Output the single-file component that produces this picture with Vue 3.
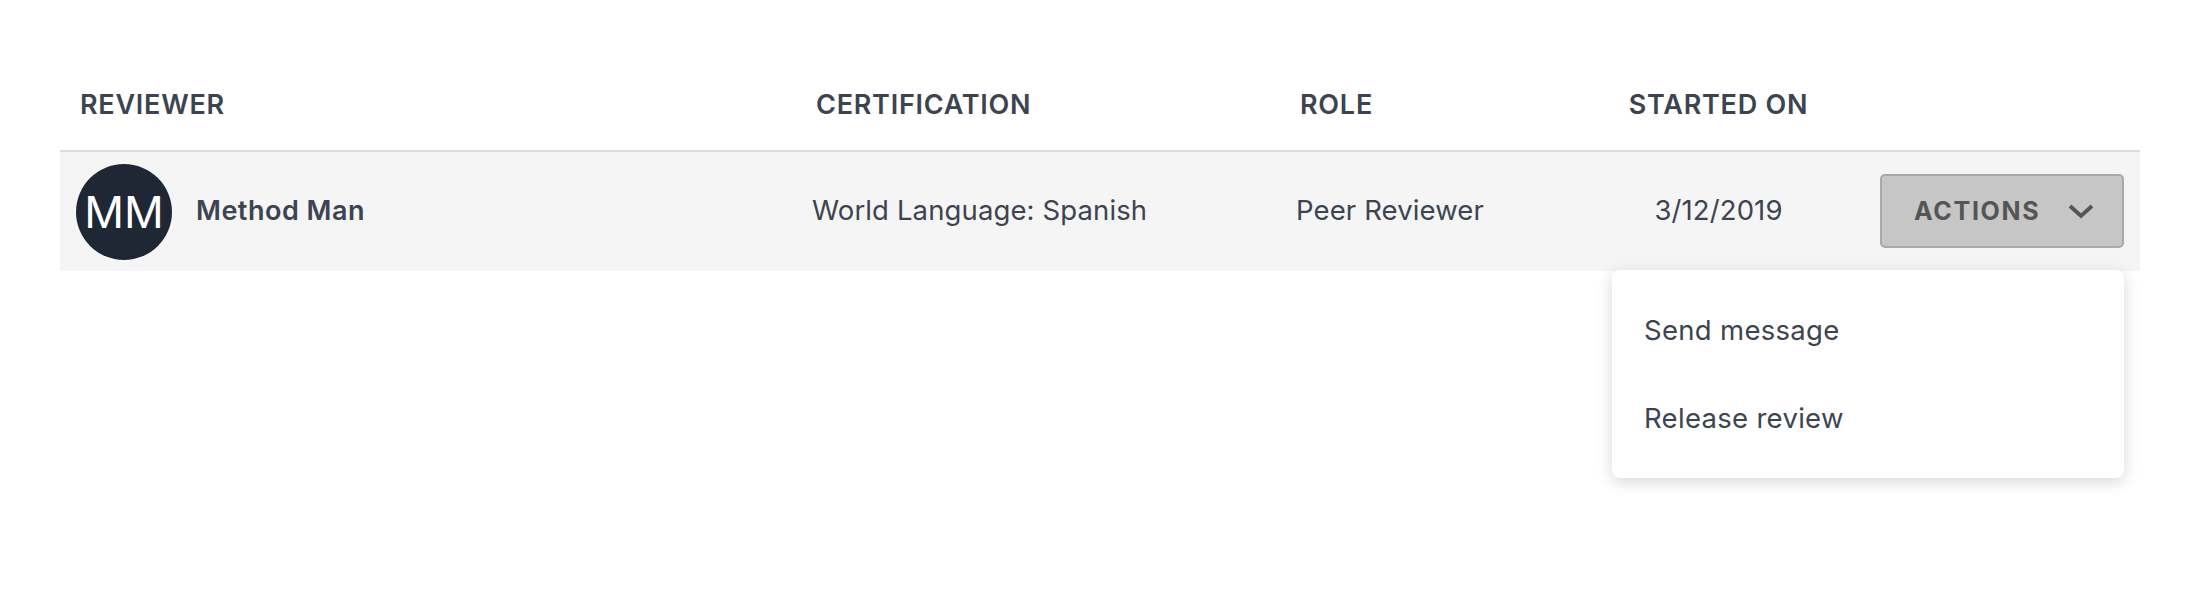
<script setup>
const menuItems = ['Send message', 'Release review']
</script>

<template>
  <div class="page">
    <div class="table">
      <div class="head">
        <div class="th first">REVIEWER</div>
        <div class="th">CERTIFICATION</div>
        <div class="th">ROLE</div>
        <div class="th centered">STARTED ON</div>
        <div></div>
      </div>
      <div class="row">
        <div class="who">
          <div class="avatar">MM</div>
          <span class="name">Method Man</span>
        </div>
        <div class="cell">World Language: Spanish</div>
        <div class="cell">Peer Reviewer</div>
        <div class="cell centered">3/12/2019</div>
        <div class="actions">
          <button class="btn" type="button">
            <span>ACTIONS</span>
            <svg width="26" height="16" viewBox="0 0 26 16" fill="none">
              <path d="M2 3 13 13 24 3" stroke="#555" stroke-width="3.8" />
            </svg>
          </button>
          <div class="menu">
            <div v-for="m in menuItems" :key="m" class="item">{{ m }}</div>
          </div>
        </div>
      </div>
    </div>
  </div>
</template>

<style>
html, body { background: #fff; }
</style>

<style scoped>
.page {
  width: 2204px;
  height: 596px;
  padding: 0 64px 0 60px;
  box-sizing: border-box;
  font-family: Inter, "Liberation Sans", sans-serif;
  color: #3d4451;
  overflow: hidden;
}
.table { width: 2080px; }
.head, .row {
  display: grid;
  grid-template-columns: 752px 484px 329px 187px 328px;
  align-items: center;
}
.head {
  height: 152px;
  padding-top: 58px;
  box-sizing: border-box;
  border-bottom: 2px solid #dcdcdc;
}
.th {
  font-size: 27px;
  font-weight: 600;
  letter-spacing: 0.75px;
  padding-left: 4px;
  white-space: nowrap;
}
.th.first { padding-left: 20px; }
.th.centered, .cell.centered { padding-left: 0; text-align: center; }
.row {
  height: 119px;
  background: #f5f5f5;
}
.who {
  display: flex;
  align-items: center;
  gap: 24px;
  padding-left: 16px;
}
.avatar {
  width: 96px;
  height: 96px;
  border-radius: 50%;
  background: #1f2735;
  color: #fff;
  font-size: 44px;
  font-weight: 400;
  display: flex;
  align-items: center;
  justify-content: center;
}
.name {
  font-size: 27px;
  font-weight: 600;
  letter-spacing: 0.5px;
  padding-bottom: 3px;
}
.cell {
  font-size: 27.5px;
  font-weight: 380;
  letter-spacing: 0.12px;
  white-space: nowrap;
  padding-bottom: 3px;
}
.actions {
  position: relative;
  display: flex;
  justify-content: flex-end;
  padding-right: 16px;
  padding-bottom: 2px;
}
.btn {
  width: 244px;
  height: 74px;
  box-sizing: border-box;
  background: #c6c6c6;
  border: 2px solid #a9a9a9;
  border-radius: 5px;
  color: #555;
  font: 700 25px Inter, "Liberation Sans", sans-serif;
  letter-spacing: 1.7px;
  display: flex;
  align-items: center;
  justify-content: space-between;
  padding: 0 28px 0 32px;
}
.menu {
  position: absolute;
  top: 96px;
  right: 16px;
  width: 512px;
  height: 208px;
  box-sizing: border-box;
  padding: 16px 0;
  background: #fff;
  border-radius: 8px;
  box-shadow: 0 4px 16px rgba(0, 0, 0, 0.16);
  display: flex;
  flex-direction: column;
}
.item {
  height: 88px;
  display: flex;
  align-items: center;
  padding-left: 32px;
  padding-top: 1px;
  box-sizing: border-box;
  font-size: 27.5px;
  font-weight: 380;
  letter-spacing: 0.3px;
}
</style>
